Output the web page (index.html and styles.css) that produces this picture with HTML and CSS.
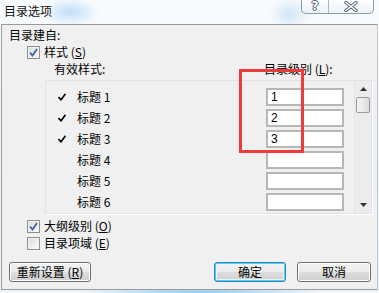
FILE: index.html
```html
<!DOCTYPE html>
<html lang="zh">
<head>
<meta charset="utf-8">
<title>目录选项</title>
<link rel="stylesheet" href="styles.css">
</head>
<body>
<div class="window">
  <div class="titlebar">
    <span class="title">目录选项</span>
    <div class="caption-buttons">
      <span class="cap-btn help">?</span>
      <span class="cap-btn close">
        <svg width="14" height="11" viewBox="0 0 14 11"><path d="M2 1.5 L12 9.5 M12 1.5 L2 9.5" stroke="#50627a" stroke-width="3.4" stroke-linecap="round"/><path d="M2 1.5 L12 9.5 M12 1.5 L2 9.5" stroke="#ffffff" stroke-width="1.6" stroke-linecap="round"/></svg>
      </span>
    </div>
  </div>
  <div class="client">
    <div class="line group-label">目录建自:</div>
    <label class="check-row first">
      <span class="checkbox checked"><svg width="9" height="9" viewBox="0 0 9 9"><path d="M1 4.5 L3.5 7.5 L8 1" fill="none" stroke="#3d62a8" stroke-width="1.8"/></svg></span>
      <span>样式 (<u>S</u>)</span>
    </label>
    <div class="header-row">
      <span class="col-a">有效样式:</span>
      <span class="col-b">目录级别 (<u>L</u>):</span>
    </div>
    <div class="listbox">
      <div class="rows">
        <div class="row"><span class="mark"><svg width="8" height="8" viewBox="0 0 8 8"><path d="M0.5 4 L3 6.8 L7.5 0.8" fill="none" stroke="#000" stroke-width="1.6"/></svg></span><span class="name">标题 1</span><span class="level">1</span></div>
        <div class="row"><span class="mark"><svg width="8" height="8" viewBox="0 0 8 8"><path d="M0.5 4 L3 6.8 L7.5 0.8" fill="none" stroke="#000" stroke-width="1.6"/></svg></span><span class="name">标题 2</span><span class="level">2</span></div>
        <div class="row"><span class="mark"><svg width="8" height="8" viewBox="0 0 8 8"><path d="M0.5 4 L3 6.8 L7.5 0.8" fill="none" stroke="#000" stroke-width="1.6"/></svg></span><span class="name">标题 3</span><span class="level">3</span></div>
        <div class="row"><span class="mark"></span><span class="name">标题 4</span><span class="level"></span></div>
        <div class="row"><span class="mark"></span><span class="name">标题 5</span><span class="level"></span></div>
        <div class="row"><span class="mark"></span><span class="name">标题 6</span><span class="level"></span></div>
      </div>
      <div class="scrollbar">
        <span class="arrow"><svg width="7" height="4" viewBox="0 0 7 4"><path d="M0 4 L3.5 0 L7 4 Z" fill="#333"/></svg></span>
        <span class="thumb"></span>
        <span class="track"></span>
        <span class="arrow"><svg width="7" height="4" viewBox="0 0 7 4"><path d="M0 0 L3.5 4 L7 0 Z" fill="#333"/></svg></span>
      </div>
    </div>
    <label class="check-row second">
      <span class="checkbox checked"><svg width="9" height="9" viewBox="0 0 9 9"><path d="M1 4.5 L3.5 7.5 L8 1" fill="none" stroke="#3d62a8" stroke-width="1.8"/></svg></span>
      <span>大纲级别 (<u>O</u>)</span>
    </label>
    <label class="check-row third">
      <span class="checkbox"></span>
      <span>目录项域 (<u>E</u>)</span>
    </label>
    <div class="button-row">
      <button class="btn reset">重新设置 (<u>R</u>)</button>
      <span class="spacer"></span>
      <button class="btn default">确定</button>
      <button class="btn cancel">取消</button>
    </div>
  </div>
  <div class="highlight"></div>
</div>
</body>
</html>
```

FILE: styles.css
```css
* { box-sizing: border-box; }
html, body { margin: 0; padding: 0; }
body {
  width: 379px;
  height: 293px;
  overflow: hidden;
  font-family: "Noto Sans CJK SC", "Liberation Sans", sans-serif;
  font-size: 12px;
  color: #000;
}
.window {
  position: relative;
  width: 379px;
  height: 293px;
  background:
    radial-gradient(ellipse 30px 14px at 70px 12px, rgba(150,200,240,0.55), rgba(150,200,240,0) 100%),
    radial-gradient(ellipse 22px 16px at 290px 14px, rgba(170,210,240,0.5), rgba(170,210,240,0) 100%),
    radial-gradient(ellipse 120px 10px at 200px 293px, rgba(120,190,240,0.8), rgba(120,190,240,0) 100%),
    linear-gradient(#f8fbfd, #eef4f8);
  display: flex;
  flex-direction: column;
}
.titlebar {
  height: 24px;
  display: flex;
  justify-content: space-between;
  align-items: flex-start;
}
.title {
  margin: 4px 0 0 4px;
  font-size: 12px;
  line-height: 14px;
  color: #111;
  text-shadow: 0 0 6px #fff, 0 0 4px #fff;
}
.caption-buttons {
  display: flex;
  margin-right: 5px;
  height: 14px;
  border: 1px solid #8e9aa8;
  border-top: none;
  border-radius: 0 0 5px 5px;
  background: linear-gradient(rgba(255,255,255,0.7), rgba(230,238,246,0.6));
  overflow: hidden;
}
.cap-btn {
  display: flex;
  align-items: center;
  justify-content: center;
}
.help {
  width: 27px;
  border-right: 1px solid #a8b4c2;
  font-family: "DejaVu Sans", sans-serif;
  font-weight: bold;
  font-size: 12px;
  line-height: 13px;
  color: #fff;
  text-shadow: -1px 0 #50627a, 1px 0 #50627a, 0 -1px #50627a, 0 1px #50627a;
}
.close { width: 44px; }

.client {
  margin-left: 1px;
  width: 377px;
  height: 266px;
  border: 1px solid #9a9a9a;
  border-right-color: #c8c8c8;
  background: #f0f0f0;
  padding-left: 1px;
}
.line { height: 14px; line-height: 14px; }
.group-label { margin: 3px 0 0 6px; }
.check-row {
  display: flex;
  align-items: center;
  height: 16px;
  padding-left: 24px;
  line-height: 14px;
}
.check-row.first { margin-top: 2px; }
.check-row.second { margin-top: 4px; }
.check-row.third { margin-top: 1px; }
.checkbox {
  width: 13px;
  height: 13px;
  border: 1px solid #8f8f8f;
  background: linear-gradient(135deg, #dcdcdc, #fbfbfb);
  box-shadow: inset 0 0 0 1px #f4f4f4;
  margin-right: 4px;
  display: flex;
  align-items: center;
  justify-content: center;
}
.header-row {
  display: flex;
  height: 14px;
  line-height: 14px;
  margin-top: 2px;
}
.col-a { margin-left: 51px; width: 210px; }

.listbox {
  display: flex;
  margin: 4px 0 0 42px;
  width: 327px;
  height: 134px;
  border: 1px solid #dfe3e8;
  box-shadow: 1px 1px 0 #ffffff;
}
.rows {
  flex: 1;
  padding-top: 5px;
}
.row {
  display: flex;
  align-items: center;
  height: 21px;
}
.mark {
  width: 31px;
  padding-left: 12px;
  display: flex;
  align-items: center;
}
.name {
  width: 189px;
  line-height: 14px;
}
.level {
  width: 78px;
  height: 18px;
  border: 2px solid #b7b7b7;
  background: #fff;
  padding-left: 3px;
  font-family: "Liberation Sans", sans-serif;
  font-size: 12px;
  line-height: 14px;
}
.scrollbar {
  width: 17px;
  display: flex;
  flex-direction: column;
  align-items: center;
  border-left: 1px solid #e6e6e6;
  background: #ececec;
}
.arrow {
  height: 16px;
  display: flex;
  align-items: center;
  justify-content: center;
}
.thumb {
  width: 14px;
  height: 16px;
  border: 1px solid #9a9a9a;
  border-radius: 2px;
  background: linear-gradient(90deg, #f6f6f6, #dcdcdc);
}
.track { flex: 1; }

.button-row {
  display: flex;
  align-items: center;
  margin: 11px 0 0 6px;
  height: 20px;
  width: 362px;
}
.spacer { flex: 1; }
.btn {
  height: 20px;
  padding: 0;
  border: 1px solid #707070;
  border-radius: 3px;
  background: linear-gradient(#f2f2f2 0%, #ebebeb 50%, #dddddd 51%, #cfcfcf 100%);
  box-shadow: inset 0 0 0 1px #fbfbfb;
  font-family: "Noto Sans CJK SC", sans-serif;
  font-size: 12px;
  line-height: 14px;
  color: #000;
}
.reset { width: 82px; }
.default {
  width: 72px;
  border-color: #3c7fb1;
  box-shadow: inset 0 0 0 1px #48d2f9, inset 0 0 0 2px #e6f6fd;
}
.cancel { width: 74px; margin-left: 11px; }

.highlight {
  position: absolute;
  left: 239px;
  top: 69px;
  width: 65px;
  height: 84px;
  border: 3px solid #ef3b3b;
}
```
